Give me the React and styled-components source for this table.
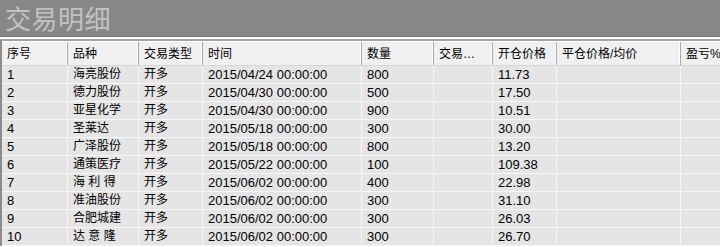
import React from "react";
import styled, { createGlobalStyle } from "styled-components";

const GlobalStyle = createGlobalStyle`
  html, body {
    margin: 0;
    padding: 0;
    background: #ffffff;
    overflow: hidden;
  }
  body {
    font-family: "Liberation Sans", "Noto Sans CJK SC", sans-serif;
  }
`;

const columns = [
  { key: "no", title: "序号", width: 66 },
  { key: "name", title: "品种", width: 71, zh: true },
  { key: "type", title: "交易类型", width: 64, zh: true },
  { key: "time", title: "时间", width: 159 },
  { key: "qty", title: "数量", width: 72 },
  { key: "eff", title: "交易效率", width: 59 },
  { key: "open", title: "开仓价格", width: 64 },
  { key: "close", title: "平仓价格/均价", width: 124 },
  { key: "pnl", title: "盈亏%", width: 80 },
];

const rows = [
  ["1", "海亮股份", "开多", "2015/04/24 00:00:00", "800", "", "11.73"],
  ["2", "德力股份", "开多", "2015/04/30 00:00:00", "500", "", "17.50"],
  ["3", "亚星化学", "开多", "2015/04/30 00:00:00", "900", "", "10.51"],
  ["4", "圣莱达", "开多", "2015/05/18 00:00:00", "300", "", "30.00"],
  ["5", "广泽股份", "开多", "2015/05/18 00:00:00", "800", "", "13.20"],
  ["6", "通策医疗", "开多", "2015/05/22 00:00:00", "100", "", "109.38"],
  ["7", "海 利 得", "开多", "2015/06/02 00:00:00", "400", "", "22.98"],
  ["8", "准油股份", "开多", "2015/06/02 00:00:00", "300", "", "31.10"],
  ["9", "合肥城建", "开多", "2015/06/02 00:00:00", "300", "", "26.03"],
  ["10", "达 意 隆", "开多", "2015/06/02 00:00:00", "300", "", "26.70"],
];

const gridCols = columns.map((c) => `${c.width}px`).join(" ");

const Page = styled.div`
  width: 720px;
  height: 247px;
  overflow: hidden;
  background: #ffffff;
`;

const TitleBar = styled.div`
  height: 36px;
  background: #878787;
  border-bottom: 1px solid #737373;
  display: flex;
  align-items: center;
  padding-left: 5px;
`;

const Title = styled.h1`
  margin: 0;
  font-family: "Noto Sans CJK SC", sans-serif;
  font-size: 26px;
  font-weight: 400;
  letter-spacing: 0.5px;
  color: #c2c2c2;
  line-height: 1;
  margin-top: -1px;
`;

const Table = styled.div`
  margin-top: 2px;
  border-top: 2px solid #a3a3a3;
  border-left: 2px solid #8c8c8c;
  width: 900px;
`;

const HeaderRow = styled.div`
  display: grid;
  grid-template-columns: ${gridCols};
  height: 23px;
  background: #f0f0f0;
  border-top: 1px solid #ffffff;
  border-bottom: 1px solid #d6d6d6;
`;

const HeaderCell = styled.div`
  font-size: 12px;
  color: #000;
  line-height: 19px;
  padding: 3px 7px 0 5px;
  white-space: nowrap;
  overflow: hidden;
  text-overflow: ellipsis;
  border-right: 1px solid #a8a8a8;
  box-shadow: inset -1px 0 0 #ffffff;
`;

const Row = styled.div`
  display: grid;
  grid-template-columns: ${gridCols};
  height: 17px;
  background: #e5e5e5;
  border-bottom: 1px solid #f7f7f7;
`;

const Cell = styled.div`
  font-size: ${(p) => (p.$zh ? 12 : 13)}px;
  color: #000;
  line-height: 17px;
  padding-left: 5px;
  white-space: nowrap;
  overflow: hidden;
  border-right: 1px solid #f7f7f7;
`;

export default function App() {
  return (
    <Page>
      <GlobalStyle />
      <TitleBar>
        <Title>交易明细</Title>
      </TitleBar>
      <Table>
        <HeaderRow>
          {columns.map((c) => (
            <HeaderCell key={c.key}>{c.title}</HeaderCell>
          ))}
        </HeaderRow>
        {rows.map((r) => (
          <Row key={r[0]}>
            {columns.map((c, i) => (
              <Cell key={c.key} $zh={c.zh}>
                {r[i] || ""}
              </Cell>
            ))}
          </Row>
        ))}
      </Table>
    </Page>
  );
}
